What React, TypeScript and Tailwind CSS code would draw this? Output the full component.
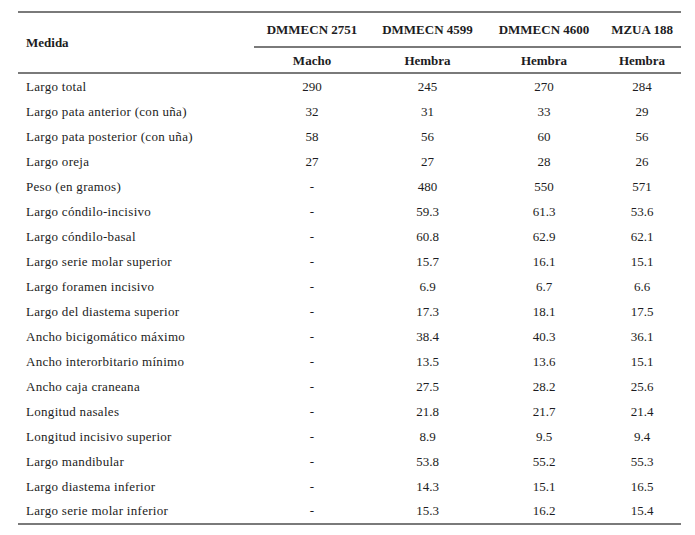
import React from 'react';

const rows: [string, string, string, string, string][] = [
  ['Largo total', '290', '245', '270', '284'],
  ['Largo pata anterior (con uña)', '32', '31', '33', '29'],
  ['Largo pata posterior (con uña)', '58', '56', '60', '56'],
  ['Largo oreja', '27', '27', '28', '26'],
  ['Peso (en gramos)', '-', '480', '550', '571'],
  ['Largo cóndilo-incisivo', '-', '59.3', '61.3', '53.6'],
  ['Largo cóndilo-basal', '-', '60.8', '62.9', '62.1'],
  ['Largo serie molar superior', '-', '15.7', '16.1', '15.1'],
  ['Largo foramen incisivo', '-', '6.9', '6.7', '6.6'],
  ['Largo del diastema superior', '-', '17.3', '18.1', '17.5'],
  ['Ancho bicigomático máximo', '-', '38.4', '40.3', '36.1'],
  ['Ancho interorbitario mínimo', '-', '13.5', '13.6', '15.1'],
  ['Ancho caja craneana', '-', '27.5', '28.2', '25.6'],
  ['Longitud nasales', '-', '21.8', '21.7', '21.4'],
  ['Longitud incisivo superior', '-', '8.9', '9.5', '9.4'],
  ['Largo mandibular', '-', '53.8', '55.2', '55.3'],
  ['Largo diastema inferior', '-', '14.3', '15.1', '16.5'],
  ['Largo serie molar inferior', '-', '15.3', '16.2', '15.4'],
];

const cols = 'grid grid-cols-[236px_116px_115px_118px_78px]';

export default function App() {
  return (
    <div className="w-[695px] h-[535px] bg-white pt-[11px] pl-[18px] text-[#1c1c22] [font-family:'Liberation_Serif',serif] text-[13px]">
      <div className="w-[663px] border-t-2 border-b-2 border-[#7a7a7a]">
        {/* cabecera */}
        <div className={`${cols} border-b-2 border-[#7a7a7a]`}>
          <div className="row-span-2 flex items-center pl-2 font-bold">Medida</div>
          <div className="h-[35px] flex items-center justify-center font-bold border-b-2 border-[#7a7a7a]">DMMECN 2751</div>
          <div className="h-[35px] flex items-center justify-center font-bold border-b-2 border-[#7a7a7a]">DMMECN 4599</div>
          <div className="h-[35px] flex items-center justify-center font-bold border-b-2 border-[#7a7a7a]">DMMECN 4600</div>
          <div className="h-[35px] flex items-center justify-center font-bold border-b-2 border-[#7a7a7a]">MZUA 188</div>
          <div className="h-[24px] flex items-center justify-center font-bold pt-px">Macho</div>
          <div className="h-[24px] flex items-center justify-center font-bold pt-px">Hembra</div>
          <div className="h-[24px] flex items-center justify-center font-bold pt-px">Hembra</div>
          <div className="h-[24px] flex items-center justify-center font-bold pt-px">Hembra</div>
        </div>
        {/* datos */}
        {rows.map((r) => (
          <div key={r[0]} className={`${cols} h-[25px] last:h-[24px] items-center`}>
            <div className="pl-2 tracking-[0.3px]">{r[0]}</div>
            <div className="text-center">{r[1]}</div>
            <div className="text-center">{r[2]}</div>
            <div className="text-center">{r[3]}</div>
            <div className="text-center">{r[4]}</div>
          </div>
        ))}
      </div>
    </div>
  );
}
